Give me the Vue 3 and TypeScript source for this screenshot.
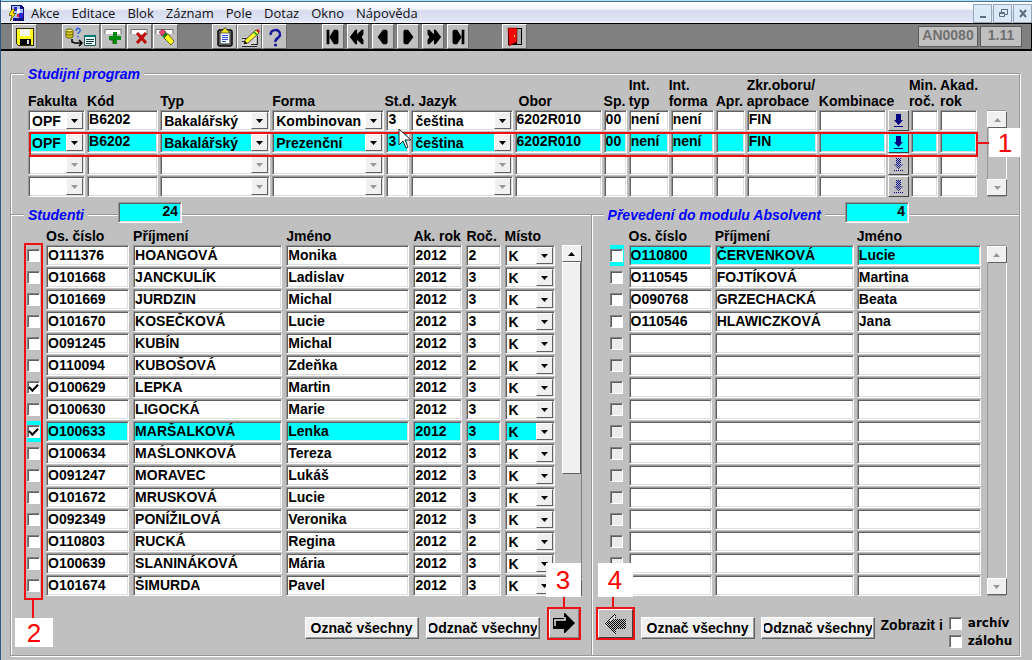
<script setup lang="ts">
import { reactive, ref } from 'vue'

interface Program {
  fakulta: string; kod: string; typ: string; forma: string; std: string; jazyk: string
  obor: string; sp: string; intTyp: string; intForma: string; apr: string; zkr: string
  komb: string; min: string; akad: string; filled: boolean
}
interface Student {
  checked: boolean; id: string; surname: string; name: string; year: string; grade: string; place: string
}
interface Graduate { checked: boolean; id: string; surname: string; name: string }

type Column = { key: keyof Program; label: string; kind: 'text' | 'combo' | 'pick'; shift?: string }

const menu = ['Akce', 'Editace', 'Blok', 'Záznam', 'Pole', 'Dotaz', 'Okno', 'Nápověda']

const columns: Column[] = [
  { key: 'fakulta', label: 'Fakulta', kind: 'combo' },
  { key: 'kod', label: 'Kód', kind: 'text' },
  { key: 'typ', label: 'Typ', kind: 'combo' },
  { key: 'forma', label: 'Forma', kind: 'combo' },
  { key: 'std', label: 'St.d.', kind: 'text', shift: 'back' },
  { key: 'jazyk', label: 'Jazyk', kind: 'combo', shift: 'indent' },
  { key: 'obor', label: 'Obor', kind: 'text', shift: 'nudge' },
  { key: 'sp', label: 'Sp.', kind: 'text' },
  { key: 'intTyp', label: 'Int.\ntyp', kind: 'text' },
  { key: 'intForma', label: 'Int.\nforma', kind: 'text', shift: 'back' },
  { key: 'apr', label: 'Apr.', kind: 'text' },
  { key: 'zkr', label: 'Zkr.oboru/\naprobace', kind: 'text' },
  { key: 'komb', label: 'Kombinace', kind: 'text' },
  { key: 'filled', label: '', kind: 'pick' },
  { key: 'min', label: 'Min.\nroč.', kind: 'text', shift: 'back' },
  { key: 'akad', label: 'Akad.\nrok', kind: 'text' },
]

const blank = (): Program => ({
  fakulta: '', kod: '', typ: '', forma: '', std: '', jazyk: '', obor: '', sp: '',
  intTyp: '', intForma: '', apr: '', zkr: '', komb: '', min: '', akad: '', filled: false,
})
const program = (forma: string): Program => ({
  ...blank(), fakulta: 'OPF', kod: 'B6202', typ: 'Bakalářský', forma, std: '3', jazyk: 'čeština',
  obor: '6202R010', sp: '00', intTyp: 'není', intForma: 'není', zkr: 'FIN', filled: true,
})
const programs = reactive<Program[]>([program('Kombinovan'), program('Prezenční'), blank(), blank()])
const activeProgram = ref(1)

const studentRows: [string, string, string, string][] = [
  ['O111376', 'HOANGOVÁ', 'Monika', '2'],
  ['O101668', 'JANCKULÍK', 'Ladislav', '3'],
  ['O101669', 'JURDZIN', 'Michal', '3'],
  ['O101670', 'KOSEČKOVÁ', 'Lucie', '3'],
  ['O091245', 'KUBÍN', 'Michal', '3'],
  ['O110094', 'KUBOŠOVÁ', 'Zdeňka', '2'],
  ['O100629', 'LEPKA', 'Martin', '3'],
  ['O100630', 'LIGOCKÁ', 'Marie', '3'],
  ['O100633', 'MARŠALKOVÁ', 'Lenka', '3'],
  ['O100634', 'MAŚLONKOVÁ', 'Tereza', '3'],
  ['O091247', 'MORAVEC', 'Lukáš', '3'],
  ['O101672', 'MRUSKOVÁ', 'Lucie', '3'],
  ['O092349', 'PONÍŽILOVÁ', 'Veronika', '3'],
  ['O110803', 'RUCKÁ', 'Regina', '2'],
  ['O100639', 'SLANINÁKOVÁ', 'Mária', '3'],
  ['O101674', 'ŠIMURDA', 'Pavel', '3'],
]
const students = reactive<Student[]>(studentRows.map(([id, surname, name, grade], i) => ({
  checked: i === 6 || i === 8, id, surname, name, year: '2012', grade, place: 'K',
})))
const activeStudent = ref(8)
const studentFields: { key: 'id' | 'surname' | 'name' | 'year' | 'grade'; label: string }[] = [
  { key: 'id', label: 'Os. číslo' },
  { key: 'surname', label: 'Příjmení' },
  { key: 'name', label: 'Jméno' },
  { key: 'year', label: 'Ak. rok' },
  { key: 'grade', label: 'Roč.' },
]

const graduateRows: [string, string, string][] = [
  ['O110800', 'ČERVENKOVÁ', 'Lucie'],
  ['O110545', 'FOJTÍKOVÁ', 'Martina'],
  ['O090768', 'GRZECHACKÁ', 'Beata'],
  ['O110546', 'HLAWICZKOVÁ', 'Jana'],
]
const graduates = reactive<Graduate[]>(Array.from({ length: 16 }, (_, i) => {
  const [id, surname, name] = graduateRows[i] ?? ['', '', '']
  return { checked: false, id, surname, name }
}))
const graduateFields: { key: 'id' | 'surname' | 'name'; label: string }[] = [
  { key: 'id', label: 'Os. číslo' },
  { key: 'surname', label: 'Příjmení' },
  { key: 'name', label: 'Jméno' },
]

const studentCount = ref('24')
const graduateCount = ref('4')
const showArchive = ref(false)
const showBackup = ref(false)

const navIcons: { label: string; path: string }[] = [
  { label: 'První', path: 'M4 3h3v16h-3zM7 11L12 3h4l1 2v12l-1 2h-4z' },
  { label: 'Předchozí blok', path: 'M2 11L8 3h2v5l5-5h2v5l-2 3 2 3v5h-2l-5-5v5H8z' },
  { label: 'Předchozí', path: 'M5 11L11 3h4l1 2v12l-1 2h-4z' },
  { label: 'Další', path: 'M17 11L11 3H7L6 5v12l1 2h4z' },
  { label: 'Další blok', path: 'M20 11L14 3h-2v5L7 3H5v5l2 3-2 3v5h2l5-5v5h2z' },
  { label: 'Poslední', path: 'M18 3h-3v16h3zM15 11L10 3H6L5 5v12l1 2h4z' },
]

function setAll(list: { checked: boolean; id: string }[], value: boolean): void {
  list.forEach((row) => { if (row.id) row.checked = value })
}
</script>

<template>
  <div class="window">
    <header class="menubar">
      <svg class="appicon" viewBox="0 0 16 16" shape-rendering="crispEdges" aria-hidden="true">
        <path d="M3 0h10l3 3v13H5V8H3z" fill="#10107a" />
        <path d="M4 1h8v3h3v9H5z" fill="#a8c0ff" />
        <path d="M6 2h3v4H6zM11 8h4v5h-4z" fill="#2828d8" />
        <path d="M9 4h3v4H9z" fill="#fff" />
        <path d="M9 9h2v3H9z" fill="#e02020" />
        <path d="M4 4h3L5 8h3l-6 8 2-6H1z" fill="#ffe000" stroke="#403800" stroke-width=".6" />
      </svg>
      <nav>
        <a v-for="item in menu" :key="item" href="#">{{ item }}</a>
      </nav>
      <div class="winbuttons">
        <button type="button" aria-label="Minimalizovat">
          <svg viewBox="0 0 16 16"><path d="M5 12h6" stroke="#5f6f80" stroke-width="2" /></svg>
        </button>
        <button type="button" aria-label="Obnovit">
          <svg viewBox="0 0 16 16" fill="none" stroke="#5f6f80"><path d="M6.500 7V4.500h6v5H10M6 4.500h7M4.500 7.500h5v4h-5zM4 8.500h6" /></svg>
        </button>
        <button type="button" aria-label="Zavřít">
          <svg viewBox="0 0 16 16"><path d="M5 5l6 7M11 5l-6 7" stroke="#5f6f80" stroke-width="2" /></svg>
        </button>
      </div>
    </header>

    <div class="toolbar" role="toolbar" aria-label="Nástroje">
      <button type="button" class="tool" aria-label="Uložit">
        <svg width="20" height="20" viewBox="0 0 20 20" shape-rendering="crispEdges">
          <path d="M1 1h18v18H3l-2-2z" fill="#302c00" /><path d="M2 2h16v16H3l-1-1z" fill="#ffff20" />
          <path d="M5 2h10v7H5z" fill="#f4f4f4" /><path d="M5 12h11v6H5z" fill="#000" /><path d="M12 13h2v4h-2z" fill="#e0e0e0" />
        </svg>
      </button>
      <div class="group edit">
        <button type="button" class="tool wide" aria-label="Dotaz">
          <svg width="34" height="20" viewBox="0 0 34 20">
            <path d="M2 3.500v6c0 2 7 2 7 0v-6" fill="#d8cc20" stroke="#605800" />
            <ellipse cx="5.500" cy="3.500" rx="3.500" ry="1.500" fill="#fff470" stroke="#605800" />
            <path d="M2 7c2 1.500 5 1.500 7 0" fill="none" stroke="#605800" />
            <path d="M12 4c0-4 5-3 4 0-1 2-2 1-2 3M14 9v1.500" fill="none" stroke="#3060e0" stroke-width="1.500" />
            <path d="M8 12v3l3 1h6M15 13l3 3-3 3" fill="none" stroke="#000" stroke-width="1.500" />
            <path d="M20.500 8.500h11v10h-11z" fill="#e8ffff" stroke="#205050" />
            <path d="M20 8h12v2H20z" fill="#007878" /><path d="M22 12.500h8M22 14.500h8M22 16.500h6" stroke="#204040" />
          </svg>
        </button>
        <button type="button" class="tool" aria-label="Vložit záznam">
          <svg width="22" height="20" viewBox="0 0 22 20">
            <path d="M2 7V2.500h16V7" fill="#fff" stroke="#555" stroke-width=".8" />
            <path d="M10 5h4v4h4v4h-4v4h-4v-4H6V9h4z" fill="#008a10" />
            <path d="M7 13h3v4" fill="none" stroke="#064806" stroke-width=".8" />
          </svg>
        </button>
        <button type="button" class="tool" aria-label="Smazat záznam">
          <svg width="22" height="20" viewBox="0 0 22 20">
            <path d="M2 7V2.500h16V7" fill="#fff" stroke="#555" stroke-width=".8" />
            <path d="M8 6l9 10M17 6L8 16" stroke="#c00808" stroke-width="3" />
          </svg>
        </button>
        <button type="button" class="tool" aria-label="Vymazat záznam">
          <svg width="22" height="20" viewBox="0 0 22 20">
            <path d="M1 7V2.500h17V7" fill="#fff" stroke="#555" stroke-width=".8" />
            <path d="M4 5l4-3 3 3-4 4z" fill="#f04070" stroke="#602030" stroke-width=".6" />
            <path d="M7 9l4-4 2 2-4 4z" fill="#208020" />
            <path d="M9 11l4-4 6 7-3 4z" fill="#ffff20" stroke="#504800" stroke-width=".8" />
          </svg>
        </button>
      </div>
      <div class="group">
        <button type="button" class="tool" aria-label="Seznam hodnot">
          <svg width="20" height="20" viewBox="0 0 20 20">
            <rect x="3" y="3" width="14" height="16" rx="2" fill="#888" stroke="#000" stroke-width="1.500" />
            <path d="M5 5h10v12H5z" fill="#f4f8ff" stroke="#222" /><path d="M6 4l2-1 1-2h2l1 2 2 1v2H6z" fill="#e8e020" stroke="#333" stroke-width=".7" />
            <path d="M7 8.500h6M7 10.500h6M7 12.500h6M7 14.500h4" stroke="#3048e0" />
          </svg>
        </button>
        <button type="button" class="tool" aria-label="Editovat">
          <svg width="22" height="22" viewBox="0 0 22 22">
            <path d="M3 11h14v10H3z" fill="#d8d8d8" /><path d="M3 12.500h7M3 15.500h5M12 18.500h7M3 20.500h15M18.500 10v9" stroke="#222" fill="none" />
            <path d="M5 18l1-4L17 4l3 3L9 17z" fill="#ffff30" stroke="#222" stroke-width=".8" />
            <path d="M17 4l2-1 2 2-1 2z" fill="#e02020" /><path d="M15 6l3 3" stroke="#10a020" stroke-width="1.500" /><path d="M5 18l1-3 2 2z" fill="#000" />
          </svg>
        </button>
        <button type="button" class="tool" aria-label="Nápověda">
          <svg width="20" height="20" viewBox="0 0 20 20">
            <path d="M6 8c-2-6 10-7 9 0 0 3-5 3-4.500 7" fill="none" stroke="#18189a" stroke-width="2.500" /><circle cx="10.500" cy="18" r="1.600" fill="#18189a" />
          </svg>
        </button>
      </div>
      <div class="group nav">
        <button v-for="icon in navIcons" :key="icon.label" type="button" class="tool" :aria-label="icon.label">
          <svg width="20" height="22" viewBox="0 0 22 22"><path :d="icon.path" fill="#000" /></svg>
        </button>
      </div>
      <button type="button" class="tool" aria-label="Konec">
        <svg width="18" height="20" viewBox="0 0 18 20">
          <path d="M2 1h14v17H2z" fill="#000" /><path d="M11 2h4v15h-4z" fill="#a8a8a8" />
          <path d="M2 1h9v14l-8 4z" fill="#f00808" stroke="#400" stroke-width=".5" /><path d="M8 8h1v2H8z" fill="#ff0" />
        </svg>
      </button>
      <div class="status"><span class="code">AN0080</span><span class="version">1.11</span></div>
    </div>

    <main class="frame">
      <section class="program">
        <div class="cap">
          <span class="rule lead"></span><h2>Studijní program</h2><span class="rule fill"></span>
        </div>
        <div class="block program-block">
          <div class="tablewrap">
            <table class="grid-program">
              <thead>
                <tr>
                  <th v-for="col in columns" :key="col.key" scope="col" :class="col.shift">{{ col.label }}</th>
                </tr>
              </thead>
              <tbody>
                <tr v-for="(row, i) in programs" :key="i" :class="{ active: i === activeProgram }" @click="activeProgram = i">
                  <td v-for="col in columns" :key="col.key">
                    <button v-if="col.kind === 'pick'" type="button" class="pick" :disabled="!row.filled" aria-label="Vybrat kombinaci">
                      <svg width="14" height="16" viewBox="0 0 14 16">
                        <defs>
                          <pattern id="dither" width="2" height="2" patternUnits="userSpaceOnUse">
                            <path d="M0 0h1v1H0zM1 1h1v1H1z" fill="#000080" />
                          </pattern>
                        </defs>
                        <path d="M5 1h5v6h2l-4.500 5L3 7h2z" :fill="row.filled ? '#000080' : 'url(#dither)'" />
                        <path d="M3 13.500h9" stroke="#000080" :stroke-dasharray="row.filled ? undefined : '1 1'" />
                      </svg>
                    </button>
                    <span v-else-if="col.kind === 'combo'" class="combo" :class="{ off: !row.filled }">
                      <select :aria-label="col.label" :disabled="!row.filled">
                        <option>{{ row[col.key] }}</option>
                      </select>
                      <span class="drop"><svg viewBox="0 0 7 4" width="7" height="4"><path d="M0 0h7L3.500 4z" /></svg></span>
                    </span>
                    <input v-else v-model="row[col.key]" type="text" class="field" :aria-label="col.label">
                  </td>
                </tr>
              </tbody>
            </table>
            <div class="mark-row"></div>
            <div class="mark-row-line"></div>
            <div class="tag tag-one">1</div>
            <svg class="cursor" width="14" height="22" viewBox="0 0 14 22" aria-hidden="true">
              <path d="M1 1v16l4-4 3 7 2-1-3-7h6z" fill="#fff" stroke="#222" />
            </svg>
          </div>
          <div class="scrollbar off">
            <button type="button" aria-label="Nahoru" disabled><svg viewBox="0 0 7 4" width="7" height="4"><path d="M0 4h7L3.500 0z" /></svg></button>
            <button type="button" aria-label="Dolů" disabled><svg viewBox="0 0 7 4" width="7" height="4"><path d="M0 0h7L3.500 4z" /></svg></button>
          </div>
        </div>
      </section>

      <div class="panels">
        <section class="panel students">
          <div class="cap tall">
            <span class="rule lead"></span><h2>Studenti</h2><span class="rule gap"></span>
            <input v-model="studentCount" class="field count" type="text" aria-label="Počet studentů"><span class="rule fill"></span>
          </div>
          <div class="block">
            <div class="tablewrap">
              <table class="grid-students">
                <thead>
                  <tr>
                    <th></th>
                    <th v-for="f in studentFields" :key="f.key" scope="col">{{ f.label }}</th>
                    <th scope="col">Místo</th>
                  </tr>
                </thead>
                <tbody>
                  <tr v-for="(row, i) in students" :key="row.id" :class="{ active: i === activeStudent }" @click="activeStudent = i">
                    <td class="tick"><input v-model="row.checked" type="checkbox" :aria-label="'Vybrat ' + row.surname"></td>
                    <td v-for="f in studentFields" :key="f.key">
                      <input v-model="row[f.key]" type="text" class="field low" :aria-label="f.label">
                    </td>
                    <td>
                      <span class="combo">
                        <select aria-label="Místo"><option>{{ row.place }}</option></select>
                        <span class="drop"><svg viewBox="0 0 7 4" width="7" height="4"><path d="M0 0h7L3.500 4z" /></svg></span>
                      </span>
                    </td>
                  </tr>
                </tbody>
              </table>
              <div class="mark-ticks"></div>
              <div class="mark-ticks-line"></div>
              <div class="tag tag-two">2</div>
            </div>
            <div class="scrollbar">
              <button type="button" aria-label="Nahoru"><svg viewBox="0 0 7 4" width="7" height="4"><path d="M0 4h7L3.500 0z" /></svg></button>
              <span class="thumb"></span><span class="track"></span>
              <button type="button" aria-label="Dolů"><svg viewBox="0 0 7 4" width="7" height="4"><path d="M0 0h7L3.500 4z" /></svg></button>
            </div>
          </div>
          <footer class="actions end">
            <button type="button" class="push" @click="setAll(students, true)"><span>Označ všechny</span></button>
            <button type="button" class="push" @click="setAll(students, false)"><span>Odznač všechny</span></button>
            <div class="marked">
              <button type="button" class="move" aria-label="Převést">
                <svg width="22" height="22" viewBox="0 0 22 22">
                  <path d="M0 5h11V0h1l10 10-10 10h-1v-4H0z" fill="#000" />
                  <path d="M2 13V7h10V4" fill="none" stroke="#e8e8e8" stroke-width="1.500" />
                </svg>
              </button>
              <div class="marked-line"></div>
              <div class="tag tag-above">3</div>
            </div>
          </footer>
        </section>

        <section class="panel graduates">
          <div class="cap tall">
            <span class="rule lead"></span><h2>Převedení do modulu Absolvent</h2><span class="rule gap"></span>
            <input v-model="graduateCount" class="field count" type="text" aria-label="Počet převedených"><span class="rule fill"></span>
          </div>
          <div class="block">
            <div class="tablewrap">
              <table class="grid-graduates">
                <thead>
                  <tr>
                    <th></th>
                    <th v-for="f in graduateFields" :key="f.key" scope="col">{{ f.label }}</th>
                  </tr>
                </thead>
                <tbody>
                  <tr v-for="(row, i) in graduates" :key="i" :class="{ active: i === 0 }">
                    <td class="tick"><input v-model="row.checked" type="checkbox" :disabled="!row.id" :aria-label="'Vybrat ' + row.surname"></td>
                    <td v-for="f in graduateFields" :key="f.key">
                      <input v-model="row[f.key]" type="text" class="field low" :aria-label="f.label">
                    </td>
                  </tr>
                </tbody>
              </table>
            </div>
            <div class="scrollbar off">
              <button type="button" aria-label="Nahoru" disabled><svg viewBox="0 0 7 4" width="7" height="4"><path d="M0 4h7L3.500 0z" /></svg></button>
              <button type="button" aria-label="Dolů" disabled><svg viewBox="0 0 7 4" width="7" height="4"><path d="M0 0h7L3.500 4z" /></svg></button>
            </div>
          </div>
          <footer class="actions">
            <div class="marked broad">
              <button type="button" class="move" aria-label="Vrátit" disabled>
                <svg width="22" height="20" viewBox="0 0 22 20" shape-rendering="crispEdges">
                  <defs>
                    <pattern id="mesh" width="2" height="2" patternUnits="userSpaceOnUse">
                      <path d="M0 0h1v1H0zM1 1h1v1H1z" fill="#000" />
                    </pattern>
                  </defs>
                  <path d="M22 5H12V0h-2L0 10l10 10h2v-5h10z" fill="url(#mesh)" />
                  <path d="M4 8l6-5v3" fill="none" stroke="#e4e4e4" />
                </svg>
              </button>
              <div class="marked-line"></div>
              <div class="tag tag-above">4</div>
            </div>
            <button type="button" class="push" @click="setAll(graduates, true)"><span>Označ všechny</span></button>
            <button type="button" class="push" @click="setAll(graduates, false)"><span>Odznač všechny</span></button>
            <div class="also">
              <span>Zobrazit i</span>
              <div class="choices">
                <label><input v-model="showArchive" type="checkbox">archív</label>
                <label><input v-model="showBackup" type="checkbox">zálohu</label>
              </div>
            </div>
          </footer>
        </section>
      </div>
    </main>
  </div>
</template>

<style>
body { margin: 0; background: #c0c0c0; }
</style>

<style scoped>
* { box-sizing: border-box; }
.window {
  min-height: 100vh; border-left: 1px solid #34587e; background: #c0c0c0; color: #000; overflow: hidden;
  font: bold 14px/16px "Liberation Sans", Arial, sans-serif;
}
button, input, select { font: inherit; color: inherit; margin: 0; border-radius: 0; }
button { padding: 0; display: flex; align-items: center; justify-content: center; }

.menubar {
  display: flex; align-items: center; height: 23px; padding: 2px 0 0 7px;
  background: linear-gradient(#fff, #f4f6fb 35%, #d6dcee 45%, #dfe5f5 90%, #f4f6fb);
  border-top: 1px solid #a8dcf4; box-shadow: inset 0 1px #46708c;
}
.appicon { width: 16px; height: 16px; }
nav { display: flex; gap: 12px; margin-left: 7px; font: 13px/18px "Open Sans", "Noto Sans", sans-serif; }
nav a { color: #111; text-decoration: none; }
.winbuttons { display: flex; gap: 1px; margin-left: auto; }
.winbuttons button { width: 19px; height: 19px; background: #dce9f7; border: 1px solid #93a6ba; }
.winbuttons svg { width: 16px; height: 16px; }

.toolbar {
  display: flex; height: 28px; padding: 0 9px 0 11px;
  background: #808080; border: 1px solid #000; border-left: 0; border-bottom-width: 2px;
}
.tool {
  width: 25px; height: 25px; background: #c0c0c0;
  border: 1px solid; border-color: #fff #696969 #696969 #fff;
}
.tool.wide { width: 38px; }
.group { display: flex; margin-left: 34px; }
.group.edit { gap: 1px; margin-left: 25px; }
.group.nav { gap: 3px; margin-left: 35px; }
.group.nav .tool { width: 22px; }
.group.nav + .tool { margin-left: 33px; }
.status { display: flex; gap: 2px; margin: 2px 0 2px auto; color: #707070; }
.status span {
  display: flex; align-items: center; justify-content: center; height: 21px;
  border: 1px solid #5c5c5c; background: #c0c0c0; padding-bottom: 3px; overflow: hidden;
}
.code { width: 60px; }
.version { width: 42px; }

.frame {
  margin: 22px 12px 0 9px; border: 1px solid #989898; border-top: 0;
  box-shadow: inset 1px 0 #fff, 1px 1px #fff;
}
.program { display: flex; flex-direction: column; }
.cap { display: flex; align-items: center; height: 18px; position: relative; top: -8px; margin-bottom: -8px; }
.cap.tall { height: 26px; top: -12px; margin-bottom: -12px; }
.rule { height: 2px; border-top: 1px solid #989898; border-bottom: 1px solid #fff; }
.rule.lead { width: 13px; }
.rule.fill { flex: 1; }
.rule.gap { width: 30px; }
.graduates .rule.gap { width: 20px; }
.graduates .rule.lead { width: 12px; }
h2 { margin: 0 4px; font: italic bold 14px/18px "Liberation Sans", Arial, sans-serif; color: #0000ff; white-space: nowrap; }

.block { display: flex; }
.program-block { padding: 0 12px 17px 17px; gap: 10px; margin-top: -6px; }
.tablewrap { position: relative; flex: 1; min-width: 0; }
table, thead, tbody { display: block; }
tr { display: grid; }
th { padding: 0; text-align: left; white-space: pre; align-self: end; font-weight: bold; position: relative; }
td { padding: 0; min-width: 0; }
thead { padding-bottom: 1px; }
tbody { display: grid; row-gap: 1px; }
tbody tr { height: 21px; }
.grid-program thead tr { height: 32px; }
.grid-program tr {
  column-gap: 2px;
  grid-template-columns:
    minmax(0, 57fr) minmax(0, 71fr) minmax(0, 110fr) minmax(0, 112fr) minmax(0, 23fr) minmax(0, 101fr)
    minmax(0, 87fr) minmax(0, 23fr) minmax(0, 40fr) minmax(0, 43fr) minmax(0, 29fr) minmax(0, 70fr)
    minmax(0, 67fr) minmax(0, 21fr) minmax(0, 27fr) minmax(0, 37fr);
}
.indent { padding-left: 7px; }
.nudge { padding-left: 4px; }
.back { margin-left: -2px; }

.field, .combo {
  display: block; width: 100%; height: 21px; background: #fff; border: 1px solid;
  border-color: #989898 #fff #fff #989898;
  box-shadow: inset 1px 1px #606060, inset -1px -1px #dedede;
}
.field { padding: 0 1px 3px; outline: none; }
.field.low { padding-bottom: 1px; }
.field.count {
  width: 64px; flex: none; align-self: flex-start; padding-right: 3px; text-align: right; background: #00ffff;
}
.active .field, .active .combo { background: #00ffff; }
.combo { display: grid; grid-template-columns: 1fr 17px; padding: 1px; }
.combo select {
  grid-area: 1 / 1 / 2 / 3; min-width: 0; width: 100%; height: 17px; padding: 1px 18px 0 2px;
  appearance: none; border: 0; background: none; outline: none; line-height: 16px; text-overflow: clip;
}
.drop {
  grid-area: 1 / 2; display: flex; align-items: center; justify-content: center; pointer-events: none;
  height: 17px; background: #f0f0f0; border: 1px solid; border-color: #fff #606060 #606060 #fff;
}
.off svg { fill: #989898; }
.pick {
  width: 100%; height: 21px; background: #c0c0c0; border: 1px solid; border-color: #fff #404040 #404040 #fff;
}
.active .pick { background: #00ffff; }

input[type="checkbox"] {
  appearance: none; flex: none; width: 13px; height: 13px; background: #fff; border: 1px solid;
  border-color: #808080 #fff #fff #808080; box-shadow: inset 1px 1px #606060;
  display: grid; place-items: center;
}
input[type="checkbox"]:disabled { background: #ececec; }
input[type="checkbox"]:checked::after {
  content: ""; width: 7px; height: 4px; border: solid #000; border-width: 0 0 2px 2px; transform: rotate(-45deg) translate(1px, -1px);
}
.tick { display: flex; align-items: center; width: 14px; }
.active .tick { background: #00ffff; }

.scrollbar { width: 20px; flex: none; margin-top: 33px; display: flex; flex-direction: column; background: #c0c0c0; border-right: 1px solid #808080; }
.panel .scrollbar { margin-top: 17px; }
.scrollbar button {
  width: 20px; height: 17px; flex: none; background: #f0f0f0; border: 1px solid; border-color: #fff #606060 #606060 #fff;
}
.scrollbar.off { justify-content: space-between; border: 1px solid #989898; border-right-color: #fff; }
.scrollbar.off button { margin: 0 -1px; }
.thumb { flex: 212; background: #f0f0f0; border: 1px solid; border-color: #fff #606060 #606060 #fff; }
.track { flex: 106; }

.panels { display: grid; grid-template-columns: minmax(0, 580fr) minmax(0, 427fr); }
.panel { display: flex; flex-direction: column; }
.students { border-right: 1px solid #989898; box-shadow: 1px 0 #fff; }
.students .block { padding: 0 9px 0 16px; gap: 7px; }
.graduates .block { padding: 0 12px 0 18px; gap: 6px; }
.grid-students tr {
  column-gap: 4px;
  grid-template-columns:
    minmax(0, 15fr) minmax(0, 83fr) minmax(0, 149fr) minmax(0, 123fr) minmax(0, 49fr) minmax(0, 34fr) minmax(0, 50fr);
}
.grid-graduates tr {
  column-gap: 3px;
  grid-template-columns: minmax(0, 16fr) minmax(0, 83fr) minmax(0, 139fr) minmax(0, 124fr);
}

.actions { display: flex; align-items: flex-start; gap: 6px; padding: 11px 4px 6px 4px; }
.actions.end { justify-content: flex-end; padding-right: 10px; gap: 7px; }
.push {
  flex: none; width: 114px; height: 22px; margin-top: 10px; padding: 0 2px; background: #f0f0f0; white-space: nowrap;
  border: 1px solid; border-color: #fff #606060 #606060 #fff; box-shadow: inset -1px -1px #a0a0a0;
}
.push span { display: flex; justify-content: center; width: 100%; overflow: hidden; }
.also { display: flex; gap: 6px; padding-top: 8px; white-space: nowrap; }
.also > span { line-height: 20px; }
.choices { display: grid; row-gap: 2px; font: bold 12px/16px "DejaVu Sans", Verdana, sans-serif; }
.choices label { display: flex; align-items: center; gap: 6px; }

.marked { position: relative; flex: none; width: 34px; height: 33px; border: 2px solid #ee1111; }
.marked.broad { width: 39px; }
.move { width: 100%; height: 100%; background: #c0c0c0; border: 1px solid; border-color: #c0c0c0 #808080 #808080 #fff; }
.broad .move { border-color: #fff #404040 #404040 #fff; }

.tag {
  position: absolute; z-index: 3; display: flex; align-items: center; justify-content: center;
  background: #fff; color: #ff0000; font-size: 26px; font-weight: normal; line-height: 30px;
}
.mark-row { position: absolute; z-index: 2; top: 55px; left: 1px; right: -1px; height: 25px; border: 2px solid #ee1111; pointer-events: none; }
.mark-row-line { position: absolute; z-index: 2; top: 65px; right: -12px; width: 12px; height: 2px; background: #ee1111; }
.tag-one { top: 51px; right: -44px; width: 32px; height: 29px; }
.cursor { position: absolute; z-index: 4; top: 51px; left: 39%; }
.mark-ticks { position: absolute; z-index: 2; top: 15px; bottom: -4px; left: -3px; width: 19px; border: 2px solid #ee1111; pointer-events: none; }
.mark-ticks-line { position: absolute; z-index: 2; bottom: -22px; left: 5px; width: 2px; height: 18px; background: #ee1111; }
.tag-two { bottom: -51px; left: -12px; width: 38px; height: 29px; }
.marked-line { position: absolute; top: -12px; left: 14px; width: 2px; height: 11px; background: #ee1111; }
.tag-above { top: -46px; left: -3px; width: 35px; height: 34px; }
.broad .tag-above { left: 0; }
</style>
